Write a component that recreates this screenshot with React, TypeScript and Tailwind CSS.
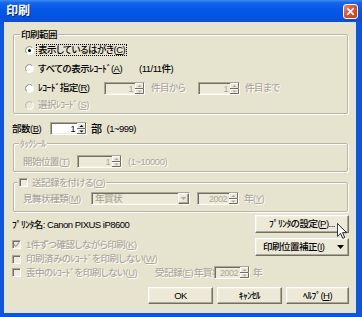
import React from "react";

const DIS = "text-[#aca899] [text-shadow:1px_1px_0_#ffffff]";
const SUNKEN =
  "border border-t-[#aca899] border-l-[#aca899] border-b-white border-r-white shadow-[inset_1px_1px_0_#716f64,inset_-1px_-1px_0_#f1efe2]";
const RAISED =
  "border border-t-white border-l-white border-b-[#716f64] border-r-[#716f64] shadow-[inset_-1px_-1px_0_#aca899,inset_1px_1px_0_#f1efe2]";
const BG = "bg-[#e6e3cf]";

function U({ c }: { c: string }) {
  return <span className="underline underline-offset-[1px]">{c}</span>;
}

function Radio({ checked, disabled }: { checked?: boolean; disabled?: boolean }) {
  return (
    <svg width="9" height="9" viewBox="0 0 9 9" className="shrink-0">
      <circle cx="4.5" cy="4.5" r="4" fill={disabled ? "#ece9d8" : "#ffffff"} />
      <path d="M1.67 7.33 A4 4 0 0 1 7.33 1.67" stroke={disabled ? "#b5b2a3" : "#8d8a7c"} fill="none" />
      <path d="M7.33 1.67 A4 4 0 0 1 1.67 7.33" stroke="#ffffff" fill="none" />
      {checked && <circle cx="4.5" cy="4.5" r="1.5" fill="#000000" />}
    </svg>
  );
}

function Check({ checked, disabled }: { checked?: boolean; disabled?: boolean }) {
  return (
    <div
      className={`w-[9px] h-[9px] shrink-0 ${SUNKEN} ${disabled ? "bg-[#eeecdf]" : "bg-white"} flex items-center justify-center`}
    >
      {checked && (
        <svg width="7" height="7" viewBox="0 0 7 7">
          <path d="M0.8 3.2 L2.8 5.2 L6.2 1.4" stroke={disabled ? "#aca899" : "#000000"} strokeWidth="1.4" fill="none" />
        </svg>
      )}
    </div>
  );
}

function SpinBtns({ disabled }: { disabled?: boolean }) {
  const c = disabled ? "#aca899" : "#000000";
  return (
    <svg width="9" height="11" viewBox="0 0 9 11" className="shrink-0">
      <rect x="0" y="0" width="9" height="11" fill="#ece9d8" />
      <path d="M0.5 5 V0.5 H8" stroke="#ffffff" fill="none" />
      <path d="M8.5 0 V5.5 H0" stroke="#716f64" fill="none" />
      <path d="M0.5 10 V6.5 H8" stroke="#ffffff" fill="none" />
      <path d="M8.5 6 V10.5 H0" stroke="#716f64" fill="none" />
      <path d="M2.5 4 L4.5 2 L6.5 4 Z" fill={c} />
      <path d="M2.5 7.5 L4.5 9.5 L6.5 7.5 Z" fill={c} />
    </svg>
  );
}

function Spin({ w, value, disabled }: { w: string; value: string; disabled?: boolean }) {
  return (
    <div className={`${w} h-[13px] shrink-0 flex ${SUNKEN} ${disabled ? "bg-[#ece9d8]" : "bg-white"}`}>
      <div
        className={`flex-1 text-right pr-[2px] pt-[1px] leading-[10px] text-[9px] ${disabled ? "text-[#aca899]" : "text-black"}`}
      >
        {value}
      </div>
      <SpinBtns disabled={disabled} />
    </div>
  );
}

function Combo({ w, value }: { w: string; value: string }) {
  return (
    <div className={`${w} h-[13px] shrink-0 flex ${SUNKEN} bg-[#ece9d8]`}>
      <div className="flex-1 pl-[3px] leading-[11px] text-[#aca899]">{value}</div>
      <div className={`w-[11px] h-[11px] ${RAISED} bg-[#ece9d8] flex items-center justify-center`}>
        <svg width="5" height="3" viewBox="0 0 5 3">
          <path d="M0 0 H5 L2.5 3 Z" fill="#aca899" />
        </svg>
      </div>
    </div>
  );
}

function Group({
  className,
  legend,
  legendLeft,
  children,
}: {
  className: string;
  legend: React.ReactNode;
  legendLeft: string;
  children: React.ReactNode;
}) {
  return (
    <div
      className={`relative border border-[#b9b6a6] rounded-[2px] shadow-[inset_1px_1px_0_#ffffff,1px_1px_0_#ffffff] ${className}`}
    >
      <div className={`absolute -top-[7px] ${legendLeft} ${BG} px-[1px] h-[13px] flex items-center`}>{legend}</div>
      {children}
    </div>
  );
}

function Btn({ className, children }: { className: string; children: React.ReactNode }) {
  return <div className={`${RAISED} bg-[#ece9d8] flex items-center ${className}`}>{children}</div>;
}

export default function App() {
  return (
    <div className="w-[362px] h-[317px] flex flex-col bg-[#0b55e1] overflow-hidden whitespace-nowrap font-['Liberation_Sans','Noto_Sans_CJK_JP',sans-serif] font-medium text-[9.5px] leading-[12px] tracking-[-0.5px] text-black [font-feature-settings:'palt']">
      {/* title bar */}
      <div className="h-[22px] shrink-0 flex items-center pl-[6px] pr-[4px] bg-[linear-gradient(180deg,#3f8cf5_0%,#1566ec_12%,#0758e6_40%,#0454e3_75%,#0a4fd6_100%)]">
        <span className="text-white font-bold text-[12px] leading-[14px] tracking-normal [text-shadow:1px_1px_0_#0b2d8f]">
          印刷
        </span>
        <div className="ml-auto w-[15px] h-[15px] rounded-[3px] border border-white bg-[linear-gradient(135deg,#f08a6a_0%,#e1502c_45%,#c93d1c_100%)] flex items-center justify-center">
          <svg width="9" height="9" viewBox="0 0 9 9">
            <path d="M1.2 1.2 L7.8 7.8 M7.8 1.2 L1.2 7.8" stroke="#ffffff" strokeWidth="1.8" />
          </svg>
        </div>
      </div>

      {/* body frame */}
      <div className="flex-1 flex flex-col pl-[4px] pr-[6px] pb-[4px]">
        <div className={`flex-1 ${BG} flex flex-col relative`}>
          {/* 印刷範囲 */}
          <Group
            className="ml-[9px] mt-[12px] w-[335px] h-[80px] pt-[6px]"
            legendLeft="left-[6px]"
            legend={<span>印刷範囲</span>}
          >
            <div className="h-[18px] flex items-center pl-[11px]">
              <Radio checked />
              <span className="ml-[2px] h-[12px] px-[1px] border border-dotted border-black leading-[10px] flex items-center">
                表示しているはがき(<U c="C" />)
              </span>
            </div>
            <div className="h-[19px] flex items-center pl-[11px]">
              <Radio />
              <span className="ml-[4px] w-[101px] shrink-0">
                すべての表示ﾚｺｰﾄﾞ(<U c="A" />)
              </span>
              <span>(11/11件)</span>
            </div>
            <div className="h-[20px] flex items-center pl-[11px]">
              <Radio />
              <span className="ml-[4px] w-[66px] shrink-0">
                ﾚｺｰﾄﾞ指定(<U c="R" />)
              </span>
              <Spin w="w-[41px]" value="1" disabled />
              <span className={`ml-[6px] w-[47px] shrink-0 ${DIS}`}>件目から</span>
              <Spin w="w-[42px]" value="1" disabled />
              <span className={`ml-[5px] ${DIS}`}>件目まで</span>
            </div>
            <div className="h-[14px] flex items-center pl-[11px]">
              <Radio disabled />
              <span className={`ml-[4px] ${DIS}`}>
                選択ﾚｺｰﾄﾞ(<U c="S" />)
              </span>
            </div>
          </Group>

          {/* 部数 */}
          <div className="mt-[8px] h-[13px] flex items-center pl-[8px]">
            <span className="w-[38px] shrink-0">
              部数(<U c="B" />)
            </span>
            <Spin w="w-[37px]" value="1" />
            <span className="ml-[4px] text-[11px]">部</span>
            <span className="ml-[5px]">(1~999)</span>
          </div>

          {/* タックシール */}
          <Group
            className="ml-[9px] mt-[8px] w-[335px] h-[29px] pt-[11px]"
            legendLeft="left-[5px]"
            legend={<span className={DIS}>ﾀｯｸｼｰﾙ</span>}
          >
            <div className="h-[13px] flex items-center pl-[9px]">
              <span className={`w-[54px] shrink-0 ${DIS}`}>
                開始位置(<U c="T" />)
              </span>
              <Spin w="w-[45px]" value="1" disabled />
              <span className={`ml-[6px] ${DIS}`}>(1~10000)</span>
            </div>
          </Group>

          {/* 送記録 */}
          <Group
            className="ml-[9px] mt-[10px] w-[335px] h-[30px] pt-[9px]"
            legendLeft="left-[4px]"
            legend={
              <div className="flex items-center">
                <Check disabled />
                <span className={`ml-[4px] ${DIS}`}>
                  送記録を付ける(<U c="O" />)
                </span>
              </div>
            }
          >
            <div className="h-[13px] flex items-center pl-[9px]">
              <span className={`w-[68px] shrink-0 ${DIS}`}>
                見舞状種類(<U c="M" />)
              </span>
              <Combo w="w-[99px]" value="年賀状" />
              <div className="ml-[7px]">
                <Spin w="w-[42px]" value="2002" disabled />
              </div>
              <span className={`ml-[5px] ${DIS}`}>
                年(<U c="Y" />)
              </span>
            </div>
          </Group>

          {/* printer + options */}
          <div className="mt-[3px] flex items-start">
            <div className="pl-[8px] flex flex-col">
              <div className="mt-[2px] h-[16px] flex items-center">ﾌﾟﾘﾝﾀ名: Canon PIXUS iP8600</div>
              <div className="mt-[4px] h-[15px] flex items-center">
                <Check checked disabled />
                <span className={`ml-[5px] ${DIS}`}>
                  1件ずつ確認しながら印刷(<U c="K" />)
                </span>
              </div>
              <div className="h-[14px] flex items-center">
                <Check disabled />
                <span className={`ml-[5px] ${DIS}`}>
                  印刷済みのﾚｺｰﾄﾞを印刷しない(<U c="W" />)
                </span>
              </div>
            </div>
            <div className="ml-auto mr-[7px] w-[94px] flex flex-col gap-[5px]">
              <Btn className="h-[18px] justify-center">
                <span>
                  ﾌﾟﾘﾝﾀの設定(<U c="P" />
                  )...
                </span>
              </Btn>
              <Btn className="h-[18px] pl-[7px] pr-[4px] justify-between">
                <span>
                  印刷位置補正(<U c="I" />)
                </span>
                <svg width="7" height="4" viewBox="0 0 7 4">
                  <path d="M0 0 H7 L3.5 4 Z" fill="#000000" />
                </svg>
              </Btn>
            </div>
          </div>
          <div className="h-[13px] flex items-center pl-[8px]">
            <Check disabled />
            <span className={`ml-[5px] w-[129px] shrink-0 ${DIS}`}>
              喪中のﾚｺｰﾄﾞを印刷しない(<U c="U" />)
            </span>
            <span className={`w-[39px] shrink-0 ${DIS}`}>
              受記録(<U c="E" />)
            </span>
            <span className={`w-[20px] shrink-0 ${DIS}`}>年賀状</span>
            <Spin w="w-[36px]" value="2002" disabled />
            <span className={`ml-[3px] ${DIS}`}>年</span>
          </div>

          {/* bottom buttons */}
          <div className="mt-[8px] mr-[7px] flex justify-end gap-[4px]">
            <Btn className="w-[65px] h-[17px] justify-center">OK</Btn>
            <Btn className="w-[65px] h-[17px] justify-center">ｷｬﾝｾﾙ</Btn>
            <Btn className="w-[63px] h-[17px] justify-center">
              <span>
                ﾍﾙﾌﾟ(<U c="H" />)
              </span>
            </Btn>
          </div>

          {/* mouse cursor */}
          <svg
            width="10"
            height="16"
            viewBox="0 0 12 19"
            className="absolute left-[333px] top-[201px]"
          >
            <path
              d="M0.5 0.5 L0.5 16 L4.3 12.3 L7 18.3 L9.3 17.3 L6.7 11.5 L11.5 11.5 Z"
              fill="#ffffff"
              stroke="#000000"
              strokeWidth="1"
            />
          </svg>
        </div>
      </div>
    </div>
  );
}
